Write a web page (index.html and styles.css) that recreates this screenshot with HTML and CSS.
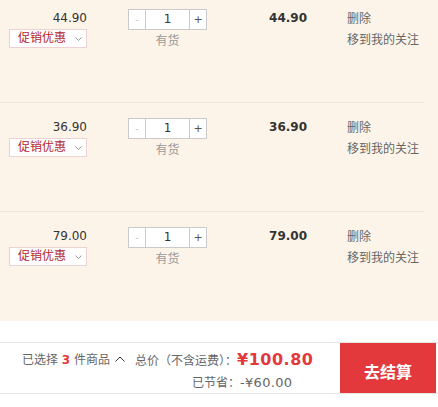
FILE: index.html
```html
<!DOCTYPE html>
<html lang="zh-CN">
<head>
    <meta charset="UTF-8">
    <meta name="viewport" content="width=device-width, initial-scale=1.0">
    <title>购物车</title>
    <link rel="stylesheet" href="styles.css">
</head>
<body>
    <div class="cart-list">
        <div class="item">
            <div class="col-price">
                <div class="price">44.90</div>
                <div class="promo">促销优惠<svg class="arrow-down" width="7" height="5" viewBox="0 0 7 5"><polyline points="0.5,0.5 3.5,3.5 6.5,0.5" fill="none" stroke="#999" stroke-width="1"/></svg></div>
            </div>
            <div class="col-qty">
                <div class="qty">
                    <span class="qty-btn minus">-</span>
                    <span class="qty-num">1</span>
                    <span class="qty-btn plus">+</span>
                </div>
                <div class="stock">有货</div>
            </div>
            <div class="col-sum">44.90</div>
            <div class="col-ops">
                <div>删除</div>
                <div>移到我的关注</div>
            </div>
        </div>
        <div class="item">
            <div class="col-price">
                <div class="price">36.90</div>
                <div class="promo">促销优惠<svg class="arrow-down" width="7" height="5" viewBox="0 0 7 5"><polyline points="0.5,0.5 3.5,3.5 6.5,0.5" fill="none" stroke="#999" stroke-width="1"/></svg></div>
            </div>
            <div class="col-qty">
                <div class="qty">
                    <span class="qty-btn minus">-</span>
                    <span class="qty-num">1</span>
                    <span class="qty-btn plus">+</span>
                </div>
                <div class="stock">有货</div>
            </div>
            <div class="col-sum">36.90</div>
            <div class="col-ops">
                <div>删除</div>
                <div>移到我的关注</div>
            </div>
        </div>
        <div class="item">
            <div class="col-price">
                <div class="price">79.00</div>
                <div class="promo">促销优惠<svg class="arrow-down" width="7" height="5" viewBox="0 0 7 5"><polyline points="0.5,0.5 3.5,3.5 6.5,0.5" fill="none" stroke="#999" stroke-width="1"/></svg></div>
            </div>
            <div class="col-qty">
                <div class="qty">
                    <span class="qty-btn minus">-</span>
                    <span class="qty-num">1</span>
                    <span class="qty-btn plus">+</span>
                </div>
                <div class="stock">有货</div>
            </div>
            <div class="col-sum">79.00</div>
            <div class="col-ops">
                <div>删除</div>
                <div>移到我的关注</div>
            </div>
        </div>
    </div>

    <div class="cart-bar">
        <div class="selected">已选择 <em>3</em> 件商品<svg class="arrow-up" width="10" height="6" viewBox="0 0 10 6"><polyline points="0.5,5.5 5,1 9.5,5.5" fill="none" stroke="#333" stroke-width="1"/></svg></div>
        <div class="totals">
            <div class="total">总价（不含运费）：<span class="amount">¥100.80</span></div>
            <div class="saved">已节省：<span class="saved-num">-¥60.00</span></div>
        </div>
        <a class="checkout" href="#">去结算</a>
    </div>
</body>
</html>
```

FILE: styles.css
```css
/* General Styles */
body {
    margin: 0;
    font-family: 'DejaVu Sans', 'Noto Sans CJK SC', sans-serif;
    font-size: 12px;
    color: #333;
    background: #fff;
}

/* Item list */
.cart-list {
    background: #fdf4e9;
    margin-top: -6px;
}

.item {
    display: flex;
    height: 109px;
    box-sizing: border-box;
    padding-top: 15px;
    margin-right: 14px;
    border-bottom: 1px solid #f4e6d8;
}

.item:last-child {
    border-bottom: none;
}

.col-price {
    width: 87px;
    display: flex;
    flex-direction: column;
    align-items: flex-end;
}

.price {
    line-height: 18px;
    color: #333;
}

.promo {
    margin-top: 2px;
    height: 17px;
    line-height: 17px;
    width: 68px;
    padding-left: 8px;
    border: 1px solid #ecd2d2;
    background: #fff;
    color: #b3282d;
    display: flex;
    align-items: center;
}

.arrow-down {
    margin-left: 9px;
    margin-top: 1px;
}

/* Quantity */
.col-qty {
    margin-left: 41px;
    width: 79px;
    display: flex;
    flex-direction: column;
    align-items: center;
}

.qty {
    display: flex;
    height: 19px;
    border: 1px solid #cacaca;
    background: #fff;
}

.qty-btn {
    width: 16px;
    text-align: center;
    line-height: 19px;
    font-size: 11px;
}

.minus {
    color: #ccc;
    border-right: 1px solid #cacaca;
}

.plus {
    color: #555;
    border-left: 1px solid #cacaca;
}

.qty-num {
    width: 43px;
    text-align: center;
    line-height: 19px;
    color: #333;
}

.stock {
    margin-top: 1px;
    line-height: 20px;
    color: #999;
}

.col-sum {
    width: 100px;
    text-align: right;
    font-weight: bold;
    line-height: 18px;
    color: #333;
}

.col-ops {
    margin-left: 40px;
    line-height: 21px;
    color: #666;
}

/* Bottom bar */
.cart-bar {
    margin-top: 21px;
    height: 50px;
    border-top: 1px solid #e6e6e6;
    border-bottom: 1px solid #e6e6e6;
    display: flex;
    color: #666;
}

.selected {
    padding-left: 22px;
    padding-top: 7px;
    line-height: 20px;
}

.selected em {
    font-style: normal;
    font-weight: bold;
    color: #e4393c;
}

.arrow-up {
    margin-left: 5px;
    vertical-align: 2px;
}

.totals {
    margin-left: 10px;
    padding-top: 6px;
}

.total {
    line-height: 22px;
}

.amount {
    font-size: 16px;
    font-weight: bold;
    color: #e4393c;
    letter-spacing: 0.5px;
}

.saved {
    margin-left: 57px;
    line-height: 22px;
}

.saved-num {
    font-size: 13px;
    letter-spacing: 0.3px;
}

.checkout {
    margin-left: auto;
    margin-right: 2px;
    width: 96px;
    background: #e4393c;
    color: #fff;
    font-size: 16px;
    font-weight: bold;
    text-decoration: none;
    display: flex;
    justify-content: center;
    align-items: center;
    padding-top: 6px;
    box-sizing: border-box;
}
```
